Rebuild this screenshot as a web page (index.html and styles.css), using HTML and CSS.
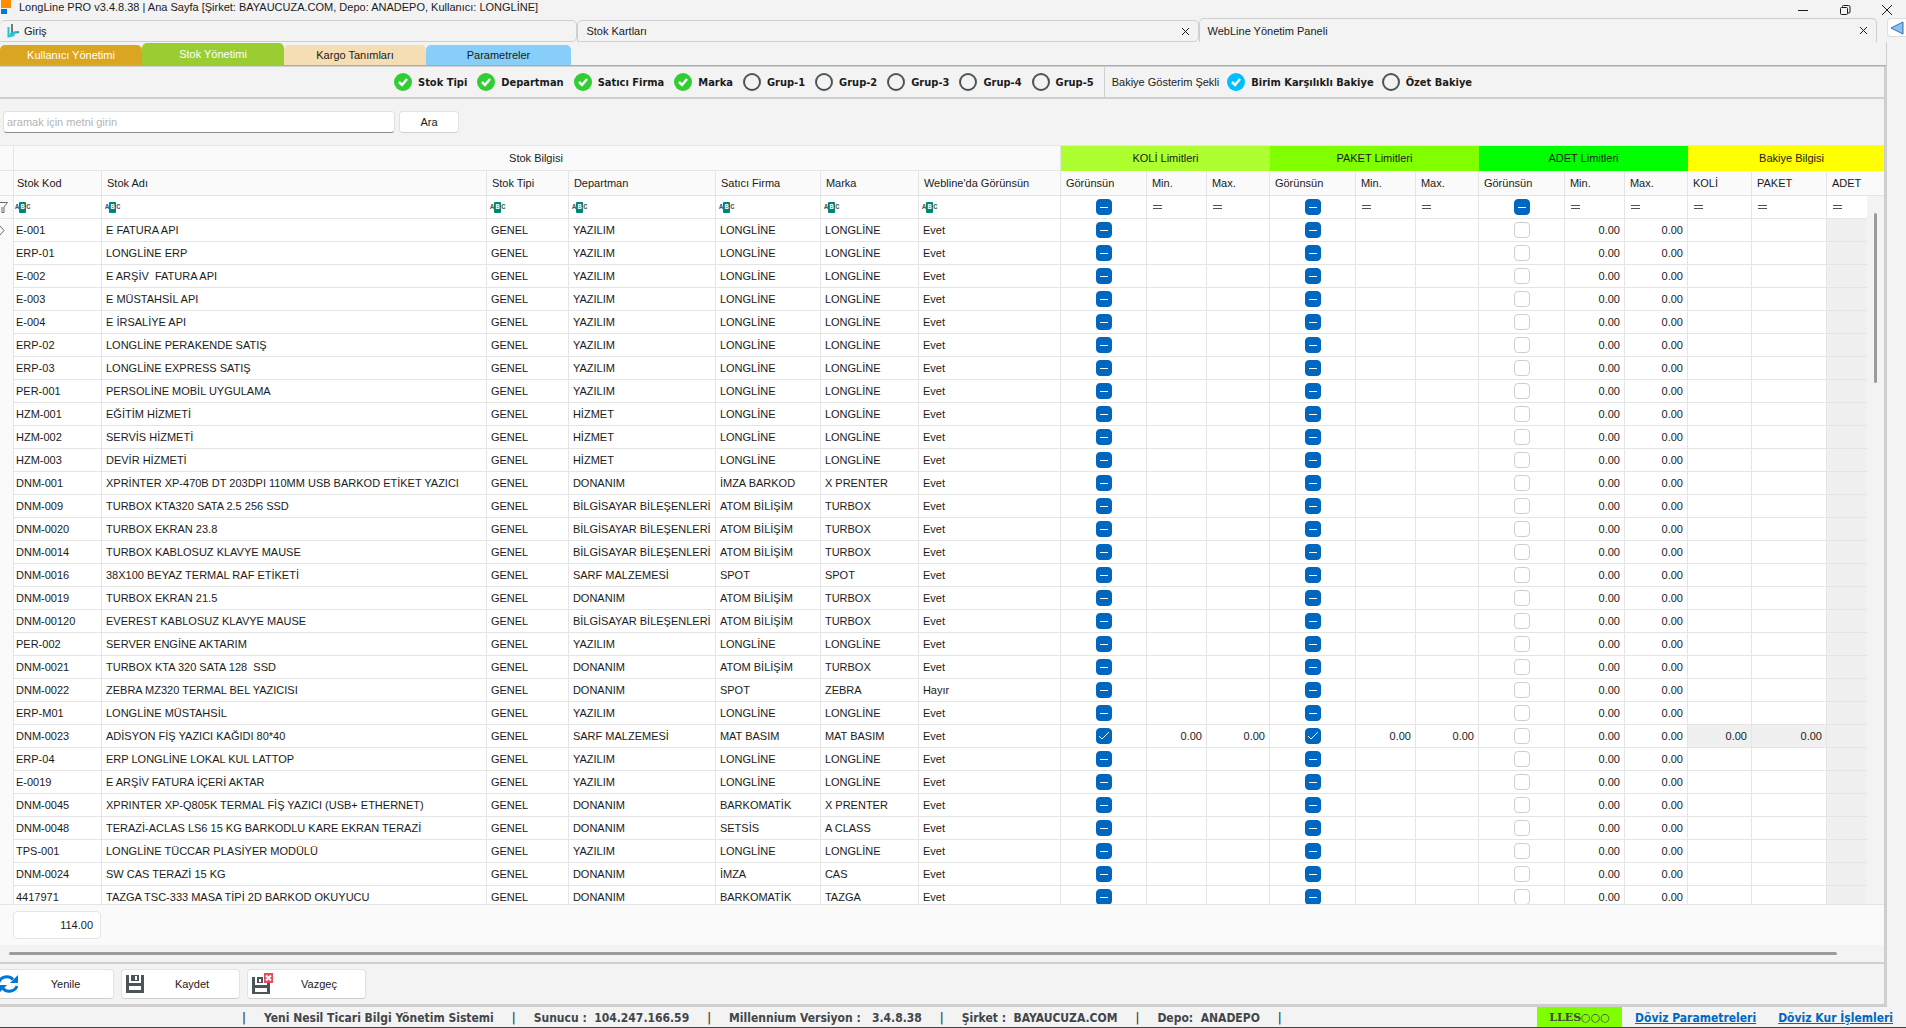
FILE: index.html
```html
<!DOCTYPE html>
<html lang="tr">
<head>
    <meta charset="UTF-8">
    <title>LongLine PRO</title>
    <link rel="stylesheet" href="styles.css">
</head>
<body>
    <header class="title">
        <svg class="logo" width="12" height="14" viewBox="0 0 12 14"><path fill="#ff8c00" d="M1 0h10v8H1z"/><path fill="#0078d7" d="M1 9h6v5H1z"/></svg>
        <h1>LongLine PRO v3.4.8.38 | Ana Sayfa [Şirket: BAYAUCUZA.COM, Depo: ANADEPO, Kullanıcı: LONGLİNE]</h1>
        <div class="win">
            <button type="button" aria-label="Küçült"><svg width="12" height="12" viewBox="0 0 12 12"><path d="M1 6.5h10"/></svg></button>
            <button type="button" aria-label="Geri yükle"><svg width="12" height="12" viewBox="0 0 12 12"><rect x="1.5" y="3.5" width="7" height="7" rx="1"/><path d="M3.5 3.500V2.500a1 1 0 0 1 1-1h5a1.500 1.500 0 0 1 1.500 1.500v5a1 1 0 0 1-1 1h-1"/></svg></button>
            <button type="button" aria-label="Kapat"><svg width="12" height="12" viewBox="0 0 12 12"><path d="M1 1l10 10M11 1L1 11"/></svg></button>
        </div>
    </header>
    <nav class="docs">
        <a href="#" class="doc home">
            <svg width="13" height="16" viewBox="0 0 13 16" fill="none"><path stroke="#777" stroke-width="2" d="M5 1v9l7-1"/><path stroke="#18c5d8" stroke-width="2" d="M1.500 4v9.500l6-1.500M3 11l7-2"/></svg>
            <span>Giriş</span>
        </a>
        <a href="#" class="doc cards"><span>Stok Kartları</span><svg class="x" width="9" height="9" viewBox="0 0 9 9"><path d="M1 1l7 7M8 1L1 8"/></svg></a>
        <a href="#" class="doc active"><span>WebLine Yönetim Paneli</span><svg class="x" width="9" height="9" viewBox="0 0 9 9"><path d="M1 1l7 7M8 1L1 8"/></svg></a>
        <button type="button" class="back" aria-label="Geri"><svg width="14" height="14" viewBox="0 0 14 14"><path fill="#8dc0ee" stroke="#2f6fc0" d="M1 7l12-6v12z"/></svg></button>
    </nav>
    <main class="panel">
        <nav class="tabs">
            <a href="#" class="gold">Kullanıcı Yönetimi</a>
            <a href="#" class="green">Stok Yönetimi</a>
            <a href="#" class="wheat">Kargo Tanımları</a>
            <a href="#" class="blue">Parametreler</a>
        </nav>
        <div class="page">
            <div class="options">
                <label><input type="checkbox" checked>Stok Tipi</label>
                <label><input type="checkbox" checked>Departman</label>
                <label><input type="checkbox" checked>Satıcı Firma</label>
                <label><input type="checkbox" checked>Marka</label>
                <label><input type="checkbox">Grup-1</label>
                <label><input type="checkbox">Grup-2</label>
                <label><input type="checkbox">Grup-3</label>
                <label><input type="checkbox">Grup-4</label>
                <label><input type="checkbox">Grup-5</label>
                <div class="balance">
                    <span>Bakiye Gösterim Şekli</span>
                    <label><input type="radio" name="balance" checked>Birim Karşılıklı Bakiye</label>
                    <label><input type="radio" name="balance">Özet Bakiye</label>
                </div>
            </div>
            <form class="search">
                <input type="text" placeholder="aramak için metni girin" aria-label="Ara">
                <button type="button">Ara</button>
            </form>
            <div class="grid">
                <table>
                    <colgroup>
                        <col class="c14"><col class="c88"><col><col class="c82"><col class="c147"><col class="c105"><col class="c98"><col class="c142">
                        <col class="c86"><col class="c60"><col class="c63">
                        <col class="c86"><col class="c60"><col class="c63">
                        <col class="c86"><col class="c60"><col class="c63">
                        <col class="c64"><col class="c75"><col class="c57">
                    </colgroup>
                    <thead>
                        <tr class="bands">
                            <th></th>
                            <th colspan="7">Stok Bilgisi</th>
                            <th colspan="3" class="koli">KOLİ Limitleri</th>
                            <th colspan="3" class="paket">PAKET Limitleri</th>
                            <th colspan="3" class="adet">ADET Limitleri</th>
                            <th colspan="3" class="bakiye">Bakiye Bilgisi</th>
                        </tr>
                        <tr class="heads">
                            <th></th><th>Stok Kod</th><th>Stok Adı</th><th>Stok Tipi</th><th>Departman</th><th>Satıcı Firma</th><th>Marka</th><th>Webline'da Görünsün</th>
                            <th>Görünsün</th><th>Min.</th><th>Max.</th>
                            <th>Görünsün</th><th>Min.</th><th>Max.</th>
                            <th>Görünsün</th><th>Min.</th><th>Max.</th>
                            <th>KOLİ</th><th>PAKET</th><th>ADET</th>
                        </tr>
                    </thead>
                    <tbody id="rows"></tbody>
                </table>
                <div class="vscroll"><div class="thumb"></div></div>
            </div>
            <div class="totals"><output>114.00</output></div>
            <div class="hscroll"><div class="thumb"></div></div>
            <div class="actions">
                <button type="button" class="first">
                    <svg width="18" height="20" viewBox="0 0 18 20" fill="none"><path stroke="#0078d7" stroke-width="3" d="M-1 8a8 7 0 0 1 14-2.500M17 12a8 7 0 0 1-14 2.500"/><path fill="#0078d7" d="M18 1v8h-8zM-1 19v-8h8z"/></svg>
                    <span>Yenile</span>
                </button>
                <button type="button">
                    <svg width="20" height="20" viewBox="0 0 20 20"><path fill="#4b5459" fill-rule="evenodd" d="M1 1h3v8h12V1h3v18H1zM4 12v4h12v-4zM6 1h8v6H6zM10 2v4h2V2z"/></svg>
                    <span>Kaydet</span>
                </button>
                <button type="button">
                    <svg width="22" height="22" viewBox="0 0 22 22"><path fill="#4b5459" fill-rule="evenodd" d="M1 4h3v8h12v-2h3v11H1zM4 15v4h12v-4zM6 4h6v6H6zM8 6v3h2V6z"/><path fill="#e8475c" d="M13 0h9v10h-9z"/><path stroke="#fff" stroke-width="2" d="M15 2.500l5 5M20 2.500l-5 5"/></svg>
                    <span>Vazgeç</span>
                </button>
            </div>
        </div>
    </main>
    <footer class="status">
        <span>|</span>
        <span>Yeni Nesil Ticari Bilgi Yönetim Sistemi</span>
        <span>|</span>
        <span>Sunucu :  104.247.166.59</span>
        <span>|</span>
        <span>Millennium Versiyon :   3.4.8.38</span>
        <span>|</span>
        <span>Şirket :  BAYAUCUZA.COM</span>
        <span>|</span>
        <span>Depo:  ANADEPO</span>
        <span>|</span>
        <div class="right">
            <b class="lles">LLES○○○</b>
            <a href="#">Döviz Parametreleri</a>
            <a href="#">Döviz Kur İşlemleri</a>
        </div>
    </footer>
<script src="rows.js"></script>
</body>
</html>
```
FILE: rows.js
```js
//kod, ad, departman, firma, marka
var data = [
    ["E-001", "E FATURA API", "YAZILIM", "LONGLİNE", "LONGLİNE"],
    ["ERP-01", "LONGLİNE ERP", "YAZILIM", "LONGLİNE", "LONGLİNE"],
    ["E-002", "E ARŞİV  FATURA API", "YAZILIM", "LONGLİNE", "LONGLİNE"],
    ["E-003", "E MÜSTAHSİL API", "YAZILIM", "LONGLİNE", "LONGLİNE"],
    ["E-004", "E İRSALİYE API", "YAZILIM", "LONGLİNE", "LONGLİNE"],
    ["ERP-02", "LONGLİNE PERAKENDE SATIŞ", "YAZILIM", "LONGLİNE", "LONGLİNE"],
    ["ERP-03", "LONGLİNE EXPRESS SATIŞ", "YAZILIM", "LONGLİNE", "LONGLİNE"],
    ["PER-001", "PERSOLİNE MOBİL UYGULAMA", "YAZILIM", "LONGLİNE", "LONGLİNE"],
    ["HZM-001", "EĞİTİM HİZMETİ", "HİZMET", "LONGLİNE", "LONGLİNE"],
    ["HZM-002", "SERVİS HİZMETİ", "HİZMET", "LONGLİNE", "LONGLİNE"],
    ["HZM-003", "DEVİR HİZMETİ", "HİZMET", "LONGLİNE", "LONGLİNE"],
    ["DNM-001", "XPRİNTER XP-470B DT 203DPI 110MM USB BARKOD ETİKET YAZICI", "DONANIM", "İMZA BARKOD", "X PRENTER"],
    ["DNM-009", "TURBOX KTA320 SATA 2.5 256 SSD", "BİLGİSAYAR BİLEŞENLERİ", "ATOM BİLİŞİM", "TURBOX"],
    ["DNM-0020", "TURBOX EKRAN 23.8", "BİLGİSAYAR BİLEŞENLERİ", "ATOM BİLİŞİM", "TURBOX"],
    ["DNM-0014", "TURBOX KABLOSUZ KLAVYE MAUSE", "BİLGİSAYAR BİLEŞENLERİ", "ATOM BİLİŞİM", "TURBOX"],
    ["DNM-0016", "38X100 BEYAZ TERMAL RAF ETİKETİ", "SARF MALZEMESİ", "SPOT", "SPOT"],
    ["DNM-0019", "TURBOX EKRAN 21.5", "DONANIM", "ATOM BİLİŞİM", "TURBOX"],
    ["DNM-00120", "EVEREST KABLOSUZ KLAVYE MAUSE", "BİLGİSAYAR BİLEŞENLERİ", "ATOM BİLİŞİM", "TURBOX"],
    ["PER-002", "SERVER ENGİNE AKTARIM", "YAZILIM", "LONGLİNE", "LONGLİNE"],
    ["DNM-0021", "TURBOX KTA 320 SATA 128  SSD", "DONANIM", "ATOM BİLİŞİM", "TURBOX"],
    ["DNM-0022", "ZEBRA MZ320 TERMAL BEL YAZICISI", "DONANIM", "SPOT", "ZEBRA"],
    ["ERP-M01", "LONGLİNE MÜSTAHSİL", "YAZILIM", "LONGLİNE", "LONGLİNE"],
    ["DNM-0023", "ADİSYON FİŞ YAZICI KAĞIDI 80*40", "SARF MALZEMESİ", "MAT BASIM", "MAT BASIM"],
    ["ERP-04", "ERP LONGLİNE LOKAL KUL LATTOP", "YAZILIM", "LONGLİNE", "LONGLİNE"],
    ["E-0019", "E ARŞİV FATURA İÇERİ AKTAR", "YAZILIM", "LONGLİNE", "LONGLİNE"],
    ["DNM-0045", "XPRINTER XP-Q805K TERMAL FİŞ YAZICI (USB+ ETHERNET)", "DONANIM", "BARKOMATİK", "X PRENTER"],
    ["DNM-0048", "TERAZİ-ACLAS LS6 15 KG BARKODLU KARE EKRAN TERAZİ", "DONANIM", "SETSİS", "A CLASS"],
    ["TPS-001", "LONGLİNE TÜCCAR PLASİYER MODÜLÜ", "YAZILIM", "LONGLİNE", "LONGLİNE"],
    ["DNM-0024", "SW CAS TERAZİ 15 KG", "DONANIM", "İMZA", "CAS"],
    ["4417971", "TAZGA TSC-333 MASA TİPİ 2D BARKOD OKUYUCU", "DONANIM", "BARKOMATİK", "TAZGA"]
];

var tbody = document.getElementById("rows");

function check(cls, label) {
    return '<td class="chk"><input type="checkbox" class="' + cls + '" aria-label="' + label + '"' + (cls == "on" ? " checked" : "") + '></td>';
}

//filtre satırı
var abc = '<td class="filter"><span class="abc">A<b>B</b>C</span></td>';
var eq = '<td class="filter"><span class="eq"></span></td>';
var html = '<tr class="filters"><td class="mark"><svg width="8" height="11" viewBox="0 0 8 11"><path d="M-2 .5h9.500L4 5v5.500H2V5"/></svg></td>';
for (var i = 0; i < 7; i++) {
    html += abc;
}
for (var j = 0; j < 3; j++) {
    html += check("some", "Görünsün") + eq + eq;
}
html += eq + eq + eq + "</tr>";

//stok satırları
for (var k = 0; k < data.length; k++) {
    var r = data[k];
    var full = r[0] == "DNM-0023";
    var num = '<td class="num">' + (full ? "0.00" : "") + "</td>";
    var bal = full ? '<td class="num dim">0.00</td>' : "<td></td>";
    var state = full ? "on" : "some";
    html += '<tr><td class="mark">' + (k == 0 ? '<svg width="6" height="11" viewBox="0 0 6 11"><path d="M0 1l4 4.500L0 10"/></svg>' : "") + "</td>" +
        "<td>" + r[0] + "</td><td>" + r[1] + "</td><td>GENEL</td><td>" + r[2] + "</td><td>" + r[3] + "</td><td>" + r[4] + "</td>" +
        "<td>" + (r[0] == "DNM-0022" ? "Hayır" : "Evet") + "</td>" +
        check(state, "KOLİ") + num + num +
        check(state, "PAKET") + num + num +
        check("off", "ADET") + '<td class="num">0.00</td><td class="num">0.00</td>' +
        bal + bal + '<td class="dim"></td></tr>';
}
tbody.innerHTML = html;
```
FILE: styles.css
```css
*{
    box-sizing: border-box;
    margin: 0;
    padding: 0;
}
body{
    display: flex;
    flex-direction: column;
    height: 100vh;
    overflow: hidden;
    background-color: #f3f3f3;
    color: #1b1b1b;
    font-family: "Liberation Sans", Arial, sans-serif;
    font-size: 11px;
}
a{
    color: inherit;
    text-decoration: none;
}
button, input{
    font: inherit;
    color: inherit;
}
/*title bar*/
.title{
    display: flex;
    height: 18px;
    line-height: 14px;
}
.title h1{
    flex: 1;
    margin-left: 7px;
    font-size: 11px;
    font-weight: normal;
}
.win{
    display: flex;
    gap: 30px;
    padding-right: 13px;
}
.win button{
    width: 12px;
    border: none;
    background: none;
}
.win svg{
    display: block;
    margin-top: 1px;
    fill: none;
    stroke: #1b1b1b;
}
/*document tabs*/
.docs{
    display: flex;
    align-items: flex-end;
    height: 24px;
}
.doc{
    display: flex;
    align-items: center;
    justify-content: space-between;
    flex: 621;
    height: 22px;
    padding: 0 8px;
    border: 1px solid #cfcfcf;
    border-radius: 5px 5px 5px 0;
}
.home{
    flex: 578;
    justify-content: flex-start;
    gap: 4px;
    padding-left: 7px;
    border-left: none;
}
.active{
    flex: 680;
    height: 24px;
    border-bottom: none;
    border-radius: 5px 5px 0 0;
}
.x{
    fill: none;
    stroke: #1b1b1b;
}
.back{
    width: 19px;
    height: 19px;
    align-self: flex-start;
    margin-left: 10px;
    border: 1px solid #ddd;
    border-right: none;
    border-radius: 4px 0 0 4px;
    background-color: white;
}
.back svg{
    display: block;
    margin: 2px;
}
/*colored tabs*/
.panel{
    flex: 1;
    display: flex;
    flex-direction: column;
    min-height: 0;
    margin-right: 19px;
}
.tabs{
    display: flex;
    align-items: flex-end;
    height: 24px;
    border-bottom: 1px solid #9acd32;
    border-right: 1px solid #cfcfcf;
}
.tabs a{
    width: 142px;
    line-height: 20px;
    border-radius: 5px 5px 0 0;
    text-align: center;
    color: #1b1b1b;
}
.tabs .gold{
    background-color: #daa520;
    color: white;
}
.tabs .green{
    line-height: 22px;
    background-color: #9acd32;
    color: white;
}
.tabs .wheat{
    background-color: #f5deb3;
}
.tabs .blue{
    width: 145px;
    background-color: #87cefa;
}
.page{
    flex: 1;
    display: flex;
    flex-direction: column;
    min-height: 0;
    border-top: 1px solid #cfcfcf;
    border-right: 3px solid #cfcfcf;
    border-bottom: 3px solid #cfcfcf;
}
/*options*/
.options{
    display: flex;
    align-items: center;
    gap: 10px;
    height: 32px;
    padding-left: 394px;
    border-bottom: 2px solid #cfcfcf;
    white-space: nowrap;
}
.options label{
    display: flex;
    align-items: center;
    gap: 6px;
    font-family: "DejaVu Sans Condensed", "DejaVu Sans", sans-serif;
    font-weight: bold;
}
.options input{
    appearance: none;
    width: 18px;
    height: 18px;
    border: 2px solid #4b5459;
    border-radius: 50%;
}
.options input:checked{
    border: none;
    background: #32cd32 url("data:image/svg+xml,%3Csvg xmlns='http://www.w3.org/2000/svg' viewBox='0 0 18 18'%3E%3Cpath fill='none' stroke='white' stroke-width='2.500' d='M5 9l3 3 5-6'/%3E%3C/svg%3E");
}
.options input[type=radio]:checked{
    background-color: #00bfff;
}
.balance{
    display: flex;
    align-items: center;
    align-self: stretch;
    gap: 8px;
    padding-left: 7px;
    border-left: 1px solid #cfcfcf;
}
/*search*/
.search{
    display: flex;
    align-items: center;
    gap: 4px;
    height: 46px;
    padding-left: 3px;
}
.search input{
    width: 392px;
    height: 22px;
    padding: 0 3px;
    border: 1px solid #e0e0e0;
    border-bottom-color: #8c8c8c;
    border-radius: 4px;
    background-color: white;
}
.search input::placeholder{
    color: #b4b4b4;
}
.search button, .actions button{
    border: 1px solid #e2e2e2;
    border-bottom-color: #cfcfcf;
    border-radius: 4px;
    background-color: white;
}
.search button{
    width: 60px;
    height: 22px;
}
/*grid*/
.grid{
    flex: 1;
    position: relative;
    min-height: 0;
    overflow: hidden;
    border-top: 1px solid #e5e5e5;
    border-bottom: 1px solid #e5e5e5;
}
table{
    width: 100%;
    table-layout: fixed;
    border-collapse: separate;
    border-spacing: 0;
    background-color: white;
}
.c14{ width: 14px; }
.c57{ width: 57px; }
.c60{ width: 60px; }
.c63{ width: 63px; }
.c64{ width: 64px; }
.c75{ width: 75px; }
.c82{ width: 82px; }
.c86{ width: 86px; }
.c88{ width: 88px; }
.c98{ width: 98px; }
.c105{ width: 105px; }
.c142{ width: 142px; }
.c147{ width: 147px; }
th, td{
    height: 23px;
    padding: 0 4px;
    border-right: 1px solid #e5e5e5;
    border-bottom: 1px solid #e5e5e5;
    white-space: pre;
    overflow: hidden;
}
th{
    height: 25px;
    padding: 0 5px;
    background-color: #fafafa;
    font-weight: normal;
    text-align: left;
}
th:nth-child(2){
    padding-left: 3px;
}
td:nth-child(2){
    padding-left: 2px;
}
th:last-child, td:last-child{
    border-right: none;
}
.bands th{
    padding-bottom: 1px;
    text-align: center;
}
.bands .koli, .bands .paket, .bands .adet, .bands .bakiye{
    border: none;
}
.koli{ background-color: #adff2f; }
.paket{ background-color: #7fff00; }
.adet{ background-color: #00ff00; }
.bakiye{ background-color: #ffff00; }
.bands .bakiye{
    padding-left: 16px;
}
.num{
    text-align: right;
}
.dim{
    background-color: #f0f0f0;
}
.mark{
    padding: 0;
    border-bottom: none;
    background-color: #fafafa;
}
.filters .mark{
    border-bottom: 1px solid #e5e5e5;
}
.mark svg{
    display: block;
    fill: none;
    stroke: #6b6b6b;
}
.chk{
    padding: 0 0 0 2px;
}
.chk input{
    appearance: none;
    display: block;
    width: 16px;
    height: 16px;
    margin: 0 auto;
    border: 1px solid #0067c0;
    border-radius: 4px;
    background-color: #0067c0;
}
.chk .some{
    background-image: linear-gradient(white, white);
    background-size: 8px 1px;
    background-position: center;
    background-repeat: no-repeat;
}
.chk .on{
    background-image: url("data:image/svg+xml,%3Csvg xmlns='http://www.w3.org/2000/svg' viewBox='0 0 14 14'%3E%3Cpath fill='none' stroke='white' d='M2 7l3 3 7-7'/%3E%3C/svg%3E");
}
.chk .off{
    border-color: #cfcfcf;
    background-color: white;
}
.filters .filter{
    padding-left: 3px;
}
.filters .filter:nth-child(2){
    padding-left: 1px;
}
.abc{
    display: flex;
    align-items: center;
    height: 11px;
    color: #4b5459;
    font-family: "Liberation Mono", monospace;
    font-size: 7px;
    font-weight: bold;
    line-height: 11px;
}
.abc b{
    width: 7px;
    border-radius: 1px;
    background-color: #008575;
    color: white;
    text-align: center;
}
.eq{
    display: block;
    width: 9px;
    height: 4px;
    margin-left: 3px;
    border-top: 1px solid #4b5459;
    border-bottom: 1px solid #4b5459;
}
.vscroll{
    position: absolute;
    top: 50px;
    right: 0;
    bottom: 0;
    width: 17px;
    background-color: #f3f3f3;
}
.vscroll .thumb{
    width: 3px;
    height: 170px;
    margin: 17px 7px;
    border-radius: 2px;
    background-color: #9b9b9b;
}
.totals{
    height: 40px;
    padding: 6px 0 0 13px;
    background-color: #fafafa;
}
.totals output{
    display: block;
    width: 88px;
    padding-right: 7px;
    border: 1px solid #e5e5e5;
    border-radius: 4px;
    background-color: white;
    line-height: 26px;
    text-align: right;
}
.hscroll{
    height: 17px;
    padding: 7px 47px 0 9px;
}
.hscroll .thumb{
    height: 3px;
    border-radius: 2px;
    background-color: #9b9b9b;
}
/*buttons*/
.actions{
    display: flex;
    align-items: center;
    gap: 7px;
    height: 42px;
    border-top: 2px solid #cfcfcf;
}
.actions button{
    display: flex;
    align-items: center;
    width: 119px;
    height: 30px;
    padding-left: 3px;
}
.actions .first{
    width: 114px;
    padding-left: 0;
    border-left: none;
    border-radius: 0 4px 4px 0;
}
.actions span{
    flex: 1;
    text-align: center;
}
/*status bar*/
.status{
    display: flex;
    gap: 18px;
    height: 21px;
    padding-left: 242px;
    border-bottom: 1px solid #444;
    color: #40464a;
    font-family: "DejaVu Sans Condensed", "DejaVu Sans", sans-serif;
    font-size: 12px;
    font-weight: bold;
    line-height: 22px;
    white-space: pre;
}
.status .right{
    display: flex;
    gap: 22px;
    margin-left: auto;
    padding-right: 13px;
}
.status a{
    color: #0067c0;
    text-decoration: underline;
}
.lles{
    width: 85px;
    margin-right: -9px;
    background-color: #7fff00;
    font-family: "DejaVu Serif", serif;
    font-size: 11px;
    text-align: center;
}
```
